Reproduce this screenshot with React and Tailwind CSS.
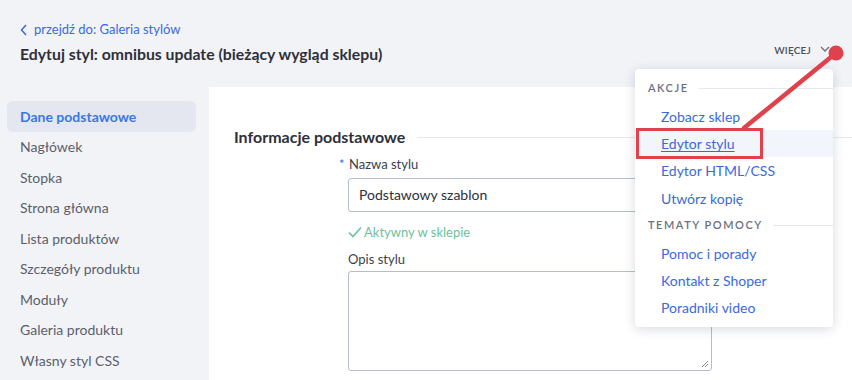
import React from "react";

const side = [
  "Dane podstawowe",
  "Nagłówek",
  "Stopka",
  "Strona główna",
  "Lista produktów",
  "Szczegóły produktu",
  "Moduły",
  "Galeria produktu",
  "Własny styl CSS",
];

function Item({ children, active, underline }) {
  return (
    <div
      className={
        "h-[27.4px] flex items-center pl-[26px] text-[14px] text-[#3a6ad9] " +
        (active ? "bg-[#f2f5fc]" : "")
      }
    >
      <span className={underline ? "underline underline-offset-2" : ""}>{children}</span>
    </div>
  );
}

function Head({ children }) {
  return (
    <div className="h-[27.4px] flex items-center pl-[13px] gap-[10px]">
      <span className="text-[11px] tracking-[0.14em] text-[#6b6f7d] font-semibold">{children}</span>
      <div className="flex-1 h-px bg-[#e6e8ee]" />
    </div>
  );
}

export default function App() {
  return (
    <div
      className="relative w-[852px] h-[380px] overflow-hidden bg-[#f2f3f7]"
      style={{ fontFamily: "Lato, 'Noto Sans', sans-serif" }}
    >
      {/* header */}
      <div className="h-[87px] px-5 pt-[20px] flex justify-between">
        <div>
          <div className="flex items-center gap-[6px] text-[13px] text-[#3a6ad9]">
            <svg width="8" height="12" viewBox="0 0 8 12" fill="none" stroke="#3a6ad9" strokeWidth="1.5">
              <path d="M6 1 L1.5 6 L6 11" />
            </svg>
            <span>przejdź do: Galeria stylów</span>
          </div>
          <div className="mt-[2px] text-[15.8px] font-bold text-[#2e3039]">
            Edytuj styl: omnibus update (bieżący wygląd sklepu)
          </div>
        </div>
        <div className="pt-[23px] pr-[2px] flex items-start gap-[9px]">
          <span className="text-[10px] font-semibold tracking-[0.02em] text-[#4b4f5c]">WIĘCEJ</span>
          <svg width="10" height="7" viewBox="0 0 10 7" fill="none" stroke="#6b6f7d" strokeWidth="1.3" className="mt-[3px]">
            <path d="M1 1 L5 5 L9 1" />
          </svg>
        </div>
      </div>

      <div className="flex h-[293px]">
        {/* sidebar */}
        <div className="w-[209px] pl-[7px] pr-[13px] pt-[14px] flex flex-col">
          {side.map((s, i) => (
            <div
              key={s}
              className={
                "h-[30.5px] flex items-center pl-[13px] rounded-md text-[14px] " +
                (i === 0 ? "bg-[#e4e7f0] text-[#3a78e0] font-bold" : "text-[#5b5f6c]")
              }
            >
              {s}
            </div>
          ))}
        </div>

        {/* main */}
        <div className="flex-1 bg-white pl-[25px] pt-[38px]">
          <div className="flex items-center gap-[12px]">
            <span className="text-[16px] font-bold text-[#2e3039]">Informacje podstawowe</span>
            <div className="flex-1 h-px bg-[#e6e8ee]" />
          </div>
          <div className="pl-[105px] mt-[6px]">
            <div className="text-[13px] text-[#3b3e4a] flex items-center">
              <span className="text-[#3a6ad9] w-[10px]">*</span>
              <span>Nazwa stylu</span>
            </div>
            <div className="ml-[9px] mt-[3px] h-[34px] border border-[#b6bccd] rounded-[3px] flex items-center pl-[10px] text-[14px] text-[#2e3039] w-[400px]">
              Podstawowy szablon
            </div>
            <div className="ml-[9px] mt-[11px] flex items-center gap-[2px] text-[13px] text-[#6cc29c]">
              <svg width="14" height="12" viewBox="0 0 14 12" fill="none" stroke="#6cc29c" strokeWidth="1.6">
                <path d="M1 6.5 L5 10.5 L13 1.5" />
              </svg>
              <span>Aktywny w sklepie</span>
            </div>
            <div className="ml-[9px] mt-[8px] text-[13px] text-[#3b3e4a]">Opis stylu</div>
            <div className="ml-[9px] mt-[1px] w-[364px] h-[100px] border border-[#b6bccd] rounded-[3px] relative">
              <svg className="absolute right-[2px] bottom-[2px]" width="8" height="8" viewBox="0 0 8 8" stroke="#888" strokeWidth="1">
                <path d="M7 1 L1 7 M7 4 L4 7" />
              </svg>
            </div>
          </div>
        </div>
      </div>

      {/* dropdown */}
      <div className="absolute left-[635px] top-[69px] w-[198px] h-[258px] bg-white rounded-[4px] shadow-[0_2px_12px_rgba(40,45,70,0.18)] pt-[6px]">
        <Head>AKCJE</Head>
        <Item>Zobacz sklep</Item>
        <Item active underline>Edytor stylu</Item>
        <Item>Edytor HTML/CSS</Item>
        <Item>Utwórz kopię</Item>
        <Head>TEMATY POMOCY</Head>
        <Item>Pomoc i porady</Item>
        <Item>Kontakt z Shoper</Item>
        <Item>Poradniki video</Item>
      </div>

      {/* annotation */}
      <div className="absolute left-[636px] top-[128px] w-[127px] h-[31px] border-[3.5px] border-[#e0414b]" />
      <svg className="absolute left-0 top-0" width="852" height="380" viewBox="0 0 852 380">
        <line x1="744" y1="128" x2="836" y2="53" stroke="#e0414b" strokeWidth="4.5" strokeLinecap="round" />
        <circle cx="836" cy="53" r="7.5" fill="#e0414b" />
      </svg>
    </div>
  );
}
